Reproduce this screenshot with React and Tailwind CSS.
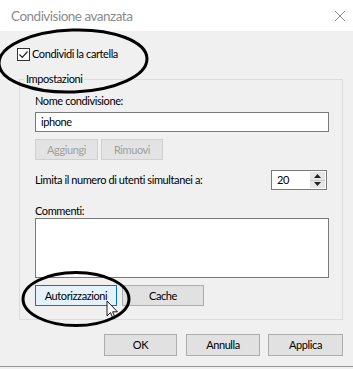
import React from "react";

const font = { fontFamily: 'Lato, "Noto Sans", Arial, sans-serif' };

function Btn({ children, className = "" }) {
  return (
    <div
      className={
        "flex items-center justify-center border border-[#adadad] bg-[#e1e1e1] text-black " +
        className
      }
    >
      {children}
    </div>
  );
}

export default function App() {
  return (
    <div
      className="relative h-[369px] w-[353px] overflow-hidden bg-[#f0f0f0] text-[11px] leading-[14px] tracking-[-0.4px] text-black"
      style={font}
    >
      {/* title bar */}
      <div className="flex h-[31px] items-center justify-between bg-white pl-[11px] pr-[6px]">
        <span className="text-[13.5px] tracking-[-0.5px] text-[#8c8c8c]">Condivisione avanzata</span>
        <svg width="12" height="12" viewBox="0 0 12 12" className="mr-[1px]">
          <path d="M1 1 L11 11 M11 1 L1 11" stroke="#8c8c8c" strokeWidth="1" />
        </svg>
      </div>

      {/* checkbox row */}
      <div className="mt-[16px] flex h-[14px] items-center pl-[17px]">
        <div className="flex h-[13px] w-[13px] items-center justify-center border border-[#333] bg-white">
          <svg width="11" height="11" viewBox="0 0 11 11">
            <path d="M1.5 5.5 L4.3 8.3 L9.5 2.5" stroke="#222" strokeWidth="1.2" fill="none" />
          </svg>
        </div>
        <span className="ml-[2px]">Condividi la cartella</span>
      </div>

      {/* group */}
      <fieldset className="ml-[19px] mt-[11px] w-[324px] border border-[#dcdcdc] p-0">
        <legend className="ml-[4px] px-[2px] leading-[14px]">Impostazioni</legend>
        <div className="pb-[13px] pl-[15px]">
          <div className="mt-[8px] leading-[14px]">Nome condivisione:</div>
          <div className="mt-[4px] flex h-[20px] w-[294px] items-center border border-[#7a7a7a] bg-white pl-[5px]">
            iphone
          </div>
          <div className="mt-[7px] flex gap-[3px]">
            <div className="flex h-[21px] w-[63px] items-center justify-center border border-[#d0d0d0] bg-[#e3e3e3] text-[#a0a0a0]">
              Aggiungi
            </div>
            <div className="flex h-[21px] w-[62px] items-center justify-center border border-[#d0d0d0] bg-[#e3e3e3] text-[#a0a0a0]">
              Rimuovi
            </div>
          </div>
          <div className="mt-[10px] flex h-[20px] w-[292px] items-center justify-between">
            <span>Limita il numero di utenti simultanei a:</span>
            <div className="flex h-[20px] w-[56px] border border-[#7a7a7a] bg-white">
              <div className="flex flex-1 items-center pl-[5px]">20</div>
              <div className="m-[1px] flex w-[15px] flex-col bg-[#e6e6e6]">
                <div className="flex flex-1 items-center justify-center border-b border-[#c8c8c8]">
                  <svg width="7" height="4" viewBox="0 0 7 4">
                    <path d="M0 4 L3.5 0 L7 4 Z" fill="#222" />
                  </svg>
                </div>
                <div className="flex flex-1 items-center justify-center">
                  <svg width="7" height="4" viewBox="0 0 7 4">
                    <path d="M0 0 L3.5 4 L7 0 Z" fill="#222" />
                  </svg>
                </div>
              </div>
            </div>
          </div>
          <div className="mt-[15px] leading-[12px]">Commenti:</div>
          <div className="mt-[1px] h-[60px] w-[294px] border border-[#7a7a7a] bg-white" />
          <div className="mt-[7px] flex gap-[5px]">
            <div className="flex h-[21px] w-[82px] items-center justify-center border border-[#0078d7] bg-[#e5f1fb]">
              Autorizzazioni
            </div>
            <Btn className="h-[21px] w-[82px]">Cache</Btn>
          </div>
        </div>
      </fieldset>

      {/* bottom buttons */}
      <div className="mt-[14px] flex pl-[104px]">
        <Btn className="h-[22px] w-[73px]">OK</Btn>
        <Btn className="ml-[9px] h-[22px] w-[74px]">Annulla</Btn>
        <Btn className="ml-[8px] h-[22px] w-[75px]">Applica</Btn>
      </div>
      <div className="mt-[10px] h-[2px] border-t border-[#9a9a9a]" />

      {/* annotation overlay */}
      <svg
        className="pointer-events-none absolute left-0 top-0"
        width="353"
        height="369"
        viewBox="0 0 353 369"
      >
        <ellipse cx="73" cy="61" rx="74" ry="31" transform="rotate(-2 73 61)" fill="none" stroke="#000" strokeWidth="3" />
        <path
          d="M107 301 L107 316 L110.5 312.5 L113 318.5 L115 317.6 L112.6 311.8 L117.5 311.8 Z"
          fill="#fff"
          stroke="#000"
          strokeWidth="0.9"
          strokeLinejoin="miter"
        />
        <ellipse cx="76" cy="299" rx="53" ry="26.5" fill="none" stroke="#000" strokeWidth="3" />
      </svg>
    </div>
  );
}
